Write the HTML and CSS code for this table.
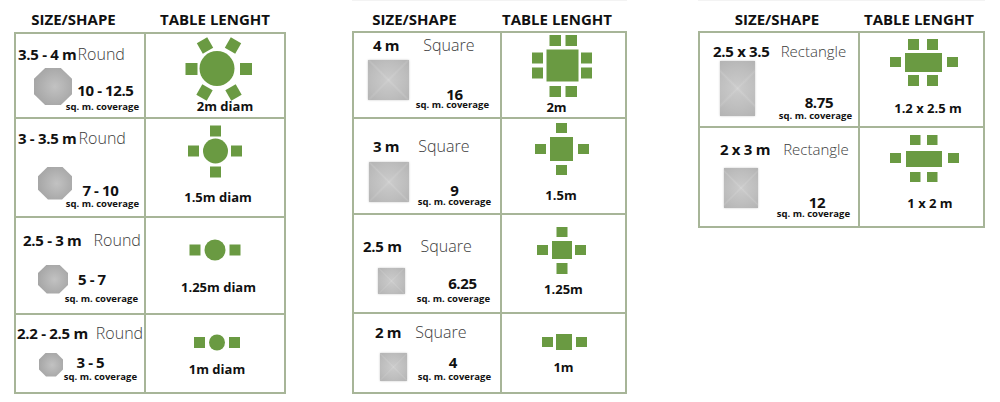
FILE: index.html
```
<!DOCTYPE html>
<html lang="en">
<head>
<meta charset="utf-8">
<title>Umbrella size chart</title>
<link rel="stylesheet" href="styles.css">
</head>
<body>
<main class="page">

  <section class="chart t1">
    <div class="heads"><div class="h h1">SIZE/SHAPE</div><div class="h h2">TABLE LENGHT</div></div>
    <div class="grid">
      <div class="size a1">
        <div class="line"><b class="dim">3.5 - 4 m</b><span class="shape">Round</span></div>
        <div class="body"><div class="pic oct"></div><div class="cover"><b class="num">10 - 12.5</b><span class="sqm">sq. m. coverage</span></div></div>
      </div>
      <div class="plan p11">
        <svg width="70" height="65" viewBox="0 0 70 65"><circle cx="33" cy="31.5" r="17.5"/><rect x="1.5" y="26" width="12" height="12"/><rect x="56" y="26" width="12" height="12"/><rect x="15" y="2.5" width="12" height="12" transform="rotate(-30 21 8.5)"/><rect x="43" y="2.5" width="12" height="12" transform="rotate(30 49 8.5)"/><rect x="14.5" y="49.5" width="12" height="12" transform="rotate(30 20.5 55.5)"/><rect x="43.5" y="49.5" width="12" height="12" transform="rotate(-30 49.5 55.5)"/></svg>
        <b class="lbl">2m diam</b>
      </div>

      <div class="size a2">
        <div class="line"><b class="dim">3 - 3.5 m</b><span class="shape">Round</span></div>
        <div class="body"><div class="pic oct"></div><div class="cover"><b class="num">7 - 10</b><span class="sqm">sq. m. coverage</span></div></div>
      </div>
      <div class="plan p12">
        <svg width="56" height="53" viewBox="0 0 56 53"><circle cx="28.5" cy="26" r="12.5"/><rect x="23" y="0.5" width="11" height="11"/><rect x="23" y="41.5" width="11" height="11"/><rect x="1" y="20.5" width="11" height="11"/><rect x="44" y="20.5" width="11" height="11"/></svg>
        <b class="lbl">1.5m diam</b>
      </div>

      <div class="size a3">
        <div class="line"><b class="dim">2.5 - 3 m</b><span class="shape">Round</span></div>
        <div class="body"><div class="pic oct"></div><div class="cover"><b class="num">5 - 7</b><span class="sqm">sq. m. coverage</span></div></div>
      </div>
      <div class="plan p13">
        <svg width="52" height="22" viewBox="0 0 52 22"><circle cx="26" cy="11" r="10.5"/><rect x="0.5" y="5.5" width="11" height="11"/><rect x="40.5" y="5.5" width="11" height="11"/></svg>
        <b class="lbl">1.25m diam</b>
      </div>

      <div class="size a4">
        <div class="line"><b class="dim">2.2 - 2.5 m</b><span class="shape">Round</span></div>
        <div class="body"><div class="pic oct"></div><div class="cover"><b class="num">3 - 5</b><span class="sqm">sq. m. coverage</span></div></div>
      </div>
      <div class="plan p14">
        <svg width="48" height="17" viewBox="0 0 48 17"><circle cx="24" cy="8.5" r="8"/><rect x="1" y="3" width="11" height="11"/><rect x="36" y="3" width="11" height="11"/></svg>
        <b class="lbl">1m diam</b>
      </div>
    </div>
  </section>

  <section class="chart t2">
    <div class="heads"><div class="h h1">SIZE/SHAPE</div><div class="h h2">TABLE LENGHT</div></div>
    <div class="grid">
      <div class="size b1">
        <div class="line"><b class="dim">4 m</b><span class="shape">Square</span></div>
        <div class="body"><div class="pic sq"></div><div class="cover"><b class="num">16</b><span class="sqm">sq. m. coverage</span></div></div>
      </div>
      <div class="plan p21">
        <svg width="62" height="64" viewBox="0 0 62 64"><rect x="15.5" y="15.5" width="32" height="32"/><rect x="18.5" y="1" width="11.5" height="11"/><rect x="34.5" y="1" width="11.5" height="11"/><rect x="18.5" y="52" width="11.5" height="11"/><rect x="34.5" y="52" width="11.5" height="11"/><rect x="1" y="18.5" width="11" height="11"/><rect x="1" y="33.5" width="11" height="11"/><rect x="50" y="18.5" width="11" height="11"/><rect x="50" y="33.5" width="11" height="11"/></svg>
        <b class="lbl">2m</b>
      </div>

      <div class="size b2">
        <div class="line"><b class="dim">3 m</b><span class="shape">Square</span></div>
        <div class="body"><div class="pic sq"></div><div class="cover"><b class="num">9</b><span class="sqm">sq. m. coverage</span></div></div>
      </div>
      <div class="plan p22">
        <svg width="56" height="54" viewBox="0 0 56 54"><rect x="16" y="15" width="23" height="24"/><rect x="22" y="1" width="11" height="10"/><rect x="22" y="43" width="11" height="10"/><rect x="1" y="22" width="11" height="10"/><rect x="44" y="22" width="11" height="10"/></svg>
        <b class="lbl">1.5m</b>
      </div>

      <div class="size b3">
        <div class="line"><b class="dim">2.5 m</b><span class="shape">Square</span></div>
        <div class="body"><div class="pic sq"></div><div class="cover"><b class="num">6.25</b><span class="sqm">sq. m. coverage</span></div></div>
      </div>
      <div class="plan p23">
        <svg width="52" height="49" viewBox="0 0 52 49"><rect x="16" y="15" width="20" height="18"/><rect x="20.5" y="1" width="11" height="10"/><rect x="20.5" y="37" width="11" height="11"/><rect x="1" y="19" width="11" height="10"/><rect x="39" y="19" width="11" height="10"/></svg>
        <b class="lbl">1.25m</b>
      </div>

      <div class="size b4">
        <div class="line"><b class="dim">2 m</b><span class="shape">Square</span></div>
        <div class="body"><div class="pic sq"></div><div class="cover"><b class="num">4</b><span class="sqm">sq. m. coverage</span></div></div>
      </div>
      <div class="plan p24">
        <svg width="47" height="18" viewBox="0 0 47 18"><rect x="15" y="1" width="16" height="16"/><rect x="1" y="4" width="11" height="10"/><rect x="35" y="4" width="11" height="10"/></svg>
        <b class="lbl">1m</b>
      </div>
    </div>
  </section>

  <section class="chart t3">
    <div class="heads"><div class="h h1">SIZE/SHAPE</div><div class="h h2">TABLE LENGHT</div></div>
    <div class="grid">
      <div class="size c1">
        <div class="line"><b class="dim">2.5 x 3.5</b><span class="shape rect-word">Rectangle</span></div>
        <div class="body"><div class="pic sq"></div><div class="cover"><b class="num">8.75</b><span class="sqm">sq. m. coverage</span></div></div>
      </div>
      <div class="plan p31">
        <svg width="70" height="49" viewBox="0 0 70 49"><rect x="16" y="15" width="37" height="19"/><rect x="19" y="1" width="11" height="11"/><rect x="38" y="1" width="11" height="11"/><rect x="19" y="37" width="11" height="11"/><rect x="38" y="37" width="11" height="11"/><rect x="1" y="19" width="11" height="10"/><rect x="58" y="19" width="11" height="10"/></svg>
        <b class="lbl">1.2 x 2.5 m</b>
      </div>

      <div class="size c2">
        <div class="line"><b class="dim">2 x 3 m</b><span class="shape rect-word">Rectangle</span></div>
        <div class="body"><div class="pic sq"></div><div class="cover"><b class="num">12</b><span class="sqm">sq. m. coverage</span></div></div>
      </div>
      <div class="plan p32">
        <svg width="71" height="49" viewBox="0 0 71 49"><rect x="17" y="17" width="36" height="16"/><rect x="21" y="1" width="10.5" height="10"/><rect x="38" y="1" width="10.5" height="10"/><rect x="21" y="38" width="10.5" height="10"/><rect x="38" y="38" width="10.5" height="10"/><rect x="1" y="19" width="11" height="10"/><rect x="59" y="19" width="11" height="10"/></svg>
        <b class="lbl">1 x 2 m</b>
      </div>
    </div>
  </section>

</main>
</body>
</html>
```

FILE: styles.css
```
* { box-sizing: border-box; }

html, body {
  margin: 0;
  background: #ffffff;
}

body {
  font-family: "Open Sans", "Liberation Sans", sans-serif;
  color: #111;
}

.page {
  display: flex;
  align-items: flex-start;
  padding-left: 14px;
  width: 1000px;
  height: 402px;
}

.t2 { margin-left: 66px; }
.t3 { margin-left: 71px; }

/* headings */
.heads {
  display: grid;
  column-gap: 2px;
  padding: 9px 2px 0;
  height: 32px;
}
.t2 .heads, .t3 .heads {
  height: 31px;
  border-top: 1px solid #f3f3f3;
  padding-top: 8px;
}
.h {
  font-weight: 700;
  font-size: 15px;
  line-height: 20px;
  text-align: center;
  white-space: nowrap;
}
.t1 .h1 { padding-right: 13px; }
.t2 .h1 { padding-right: 25px; }
.t2 .h2 { padding-right: 15px; }
.t3 .h1 { padding-right: 4px; }
.t3 .h2 { padding-right: 5px; }

/* grid of cells */
.grid {
  display: grid;
  gap: 2px;
  background: #a7b598;
  border: 2px solid #a7b598;
}
.t1 .heads, .t1 .grid { grid-template-columns: 128px 138px; }
.t1 .grid { grid-template-rows: 83px 97px 95px 77px; }
.t2 .heads, .t2 .grid { grid-template-columns: 146px 123px; }
.t2 .grid { grid-template-rows: 84px 94px 97px 78px; }
.t3 .heads, .t3 .grid { grid-template-columns: 158px 123px; }
.t3 .grid { grid-template-rows: 93px 98px; }

.size, .plan {
  background: #fff;
  overflow: hidden;
}

/* left column: size / shape */
.size {
  display: flex;
  flex-direction: column;
  padding-top: var(--pt);
}
.line {
  display: flex;
  align-items: baseline;
  gap: var(--gap);
  padding-left: var(--pl);
  white-space: nowrap;
}
.dim {
  font-weight: 700;
  font-size: 15px;
  line-height: 18px;
  letter-spacing: -0.3px;
}
.shape {
  font-weight: 300;
  font-size: 16px;
  line-height: 18px;
  color: #3c3c3c;
}
.rect-word { font-size: 15px; }

.body {
  display: flex;
  align-items: flex-start;
}
.pic {
  flex: none;
  width: var(--w);
  height: var(--h);
  margin-left: var(--ml);
  margin-top: var(--mt);
  margin-right: -20px;
}
.oct {
  clip-path: polygon(29.3% 0, 70.7% 0, 100% 29.3%, 100% 70.7%, 70.7% 100%, 29.3% 100%, 0 70.7%, 0 29.3%);
  background: radial-gradient(circle at 55% 50%, #c2c2c2 0, #b1b1b1 45%, #9d9d9d 100%);
}
.sq {
  background:
    linear-gradient(45deg, rgba(255,255,255,0) 47%, rgba(255,255,255,0.12) 50%, rgba(255,255,255,0) 53%),
    linear-gradient(-45deg, rgba(255,255,255,0) 47%, rgba(255,255,255,0.1) 50%, rgba(255,255,255,0) 53%),
    radial-gradient(circle at 50% 50%, #cbcbcb 0, #bebebe 60%, #b3b3b3 100%);
  box-shadow: 0 0 2px rgba(0,0,0,0.22);
}

.cover {
  margin-left: auto;
  margin-top: var(--cm);
  padding-right: var(--pr);
  display: flex;
  flex-direction: column;
  align-items: center;
  white-space: nowrap;
}
.num {
  font-weight: 700;
  font-size: 15px;
  line-height: 12px;
  letter-spacing: -0.4px;
  margin-left: var(--nl, 0px);
  margin-right: var(--nr, 0px);
}
.sqm {
  font-weight: 700;
  font-size: 9.5px;
  line-height: 9px;
  margin-top: var(--cg, 0px);
}

.a1 { --pt: 11px; --pl: 2px; --gap: 1px; --ml: 18px; --mt: 5px; --w: 38px; --h: 37px; --cm: 21px; --pr: 5px; --nl: 6px; --cg: 6px; }
.a2 { --pt: 9.5px; --pl: 2px; --gap: 2px; --ml: 22px; --mt: 20px; --w: 34px; --h: 33px; --cm: 37px; --pr: 5px; --nr: 4px; --cg: 3px; }
.a3 { --pt: 12.5px; --pl: 7px; --gap: 12px; --ml: 22px; --mt: 16px; --w: 30px; --h: 29px; --cm: 24px; --pr: 6px; --nr: 19px; --cg: 9px; }
.a4 { --pt: 8.5px; --pl: 1px; --gap: 8px; --ml: 23px; --mt: 11px; --w: 24px; --h: 24px; --cm: 14px; --pr: 7px; --nr: 20px; --cg: 4.5px; }
.b1 { --pt: 2.5px; --pl: 19px; --gap: 24px; --ml: 14px; --mt: 6px; --w: 41px; --h: 40px; --cm: 34.5px; --pr: 11px; --nl: 4px; --cg: 0px; }
.b2 { --pt: 18px; --pl: 19px; --gap: 19px; --ml: 15px; --mt: 7px; --w: 40px; --h: 40px; --cm: 28.5px; --pr: 9px; --cg: 1.5px; }
.b3 { --pt: 22px; --pl: 9px; --gap: 19px; --ml: 24px; --mt: 13px; --w: 27px; --h: 26px; --cm: 21.5px; --pr: 10px; --nl: 18px; --cg: 5px; }
.b4 { --pt: 9px; --pl: 21px; --gap: 14px; --ml: 26px; --mt: 12px; --w: 27px; --h: 28px; --cm: 14.5px; --pr: 9px; --nr: 3px; --cg: 4px; }
.c1 { --pt: 9px; --pl: 13px; --gap: 11px; --ml: 20px; --mt: 1px; --w: 35px; --h: 55px; --cm: 35.5px; --pr: 6px; --nl: 7px; --cg: 3px; }
.c2 { --pt: 12px; --pl: 20px; --gap: 13px; --ml: 24px; --mt: 10px; --w: 34px; --h: 40px; --cm: 37.5px; --pr: 8px; --nl: 7px; --cg: 1.5px; }

/* right column: table layout plans */
.plan {
  display: flex;
  flex-direction: column;
  align-items: center;
  padding-top: var(--pt);
}
.plan svg {
  display: block;
  flex: none;
  fill: #6a9a42;
  margin-left: var(--sl);
}
.lbl {
  font-weight: 700;
  font-size: 13px;
  line-height: 14px;
  white-space: nowrap;
  margin-top: var(--lt);
  margin-left: var(--ll);
}

.p11 { --pt: 3px; --sl: 8px; --lt: -3px; --ll: 20px; }
.p12 { --pt: 6px; --sl: 0px; --lt: 12px; --ll: 6px; }
.p13 { --pt: 21px; --sl: 0px; --lt: 19px; --ll: 7px; }
.p14 { --pt: 19px; --sl: 4px; --lt: 11px; --ll: 4px; }
.p21 { --pt: 1px; --sl: -3px; --lt: 1.5px; --ll: -14px; }
.p22 { --pt: 3px; --sl: -3px; --lt: 12px; --ll: -5px; }
.p23 { --pt: 11px; --sl: -3px; --lt: 7px; --ll: 0px; }
.p24 { --pt: 19px; --sl: 2px; --lt: 9px; --ll: 0px; }
.p31 { --pt: 5px; --sl: 5px; --lt: 14px; --ll: 13px; }
.p32 { --pt: 6px; --sl: 6px; --lt: 13px; --ll: 17px; }
```
